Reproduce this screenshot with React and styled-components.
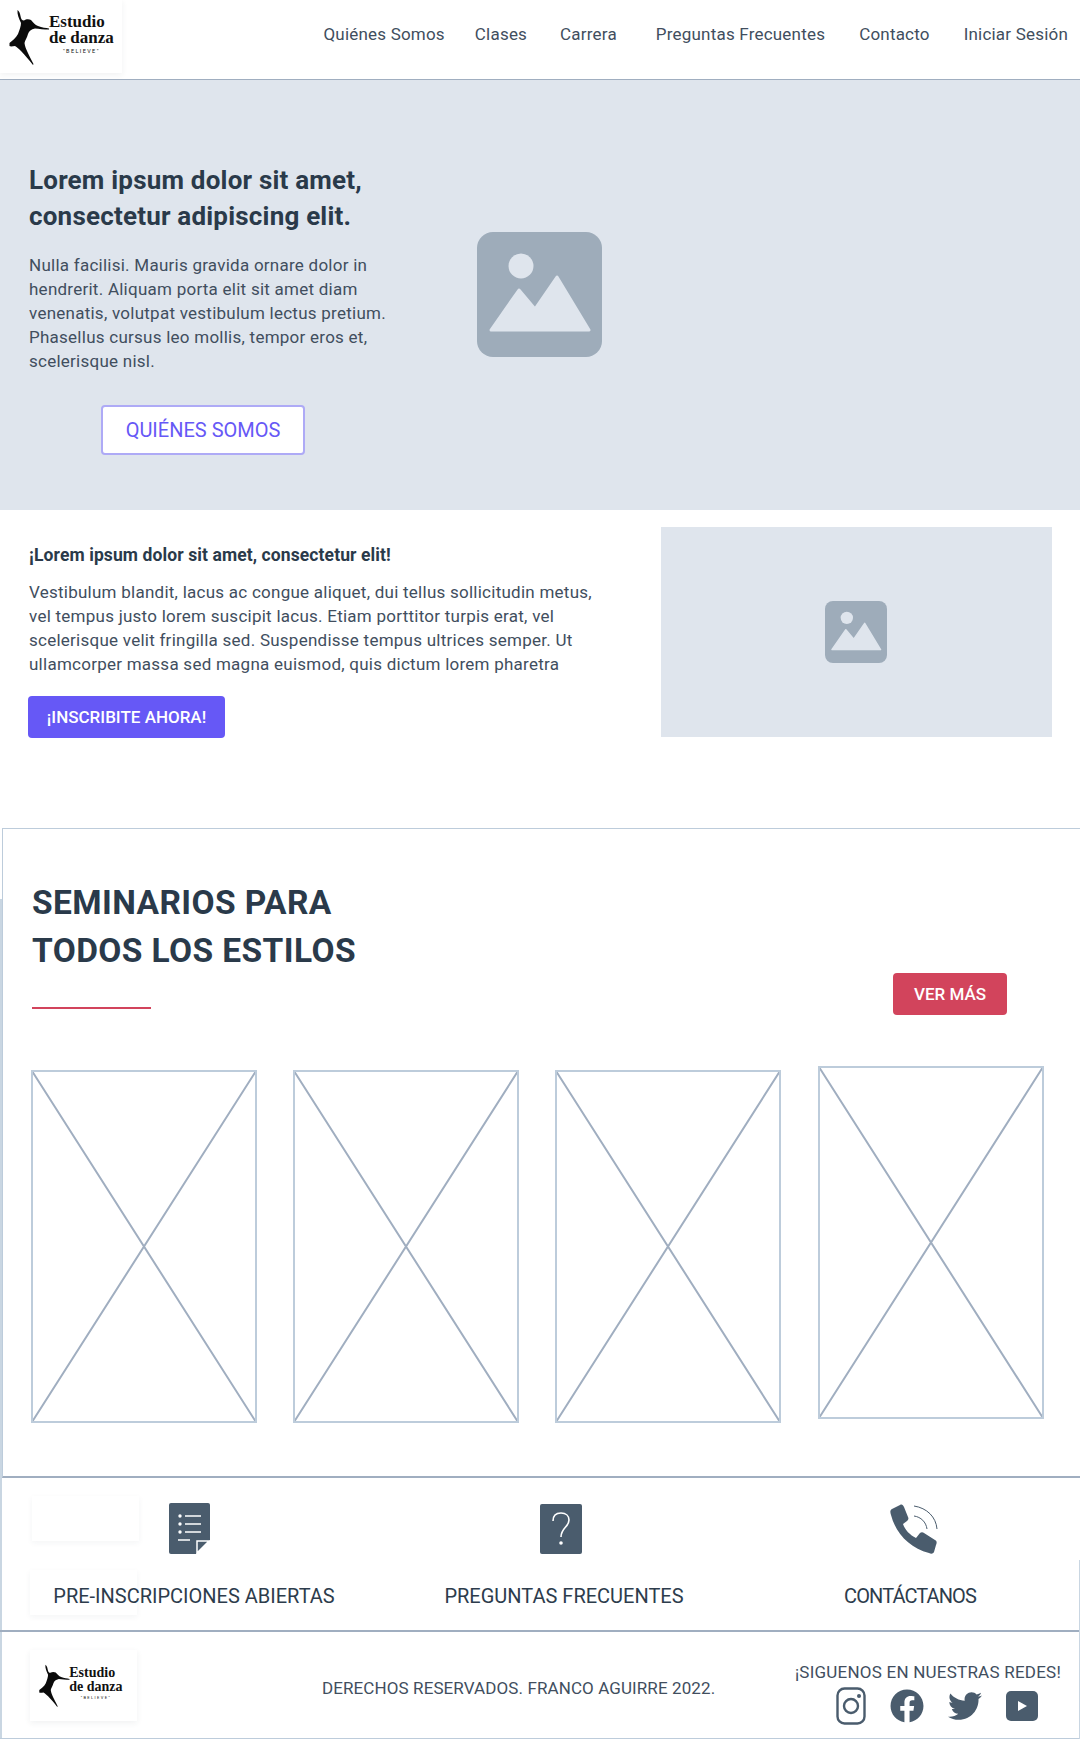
import React from "react";
import styled, { createGlobalStyle } from "styled-components";
import { FaFacebook, FaTwitter } from "react-icons/fa";

const Global = createGlobalStyle`
  html, body { margin: 0; padding: 0; background: #fff; }
  body { font-family: Roboto, "Liberation Sans", sans-serif; color: #2d3c4c; }
  * { box-sizing: border-box; }
`;

const Page = styled.div`
  position: relative;
  width: 1080px;
  height: 1739px;
  overflow: hidden;
  &::before {
    content: "";
    position: absolute;
    left: 0;
    top: 899px;
    bottom: 0;
    width: 2px;
    background: #c9d6e2;
  }
  &::after {
    content: "";
    position: absolute;
    right: 0;
    top: 1560px;
    bottom: 0;
    width: 1px;
    background: #c9d6e2;
  }
`;

const Header = styled.header`
  height: 80px;
  border-bottom: 1px solid #a0aec0;
  display: flex;
  justify-content: space-between;
`;

const LogoCard = styled.div`
  width: ${(p) => p.$w}px;
  height: ${(p) => p.$h}px;
  padding-left: ${(p) => p.$pad}px;
  background: #fff;
  box-shadow: 0 2px 6px rgba(45, 55, 72, 0.07);
  display: flex;
  align-items: center;
  flex: none;
`;

const LogoText = styled.div`
  font-family: "Liberation Serif", serif;
  font-weight: 700;
  color: #111;
  text-align: left;
  font-size: ${(p) => p.$size}px;
  line-height: 0.93;
  margin-left: -1px;
  margin-top: -5px;
  white-space: nowrap;
`;

const Believe = styled.div`
  font-family: Roboto, sans-serif;
  font-weight: 400;
  font-size: ${(p) => p.$size}px;
  letter-spacing: 1.4px;
  line-height: 1;
  margin-top: 3px;
  text-align: center;
`;

const Nav = styled.nav`
  display: flex;
  align-items: center;
  height: 68px;
  padding-right: 12px;
`;

const NavLink = styled.a`
  font-size: 17px;
  color: #414e5e;
  letter-spacing: 0.2px;
  margin-left: ${(p) => p.$gap}px;
  white-space: nowrap;
`;

const Hero = styled.section`
  height: 430px;
  background: #dfe5ed;
  display: flex;
  padding: 82px 0 0 29px;
`;

const HeroCopy = styled.div`
  width: 448px;
  flex: none;
`;

const HeroTitle = styled.h1`
  margin: 0 0 19px;
  font-size: 26px;
  line-height: 36px;
  font-weight: 700;
  letter-spacing: 0.2px;
  color: #2a3a4a;
`;

const BodyText = styled.p`
  margin: 0;
  font-size: 17px;
  line-height: 24px;
  letter-spacing: 0.25px;
  color: #414e5e;
  white-space: nowrap;
`;

const OutlineButton = styled.a`
  display: flex;
  align-items: center;
  justify-content: center;
  width: 204px;
  height: 50px;
  margin: 32px 0 0 72px;
  background: #fff;
  border: 2px solid #aeaaf6;
  border-radius: 4px;
  font-size: 20px;
  color: #6658f6;
`;

const HeroImage = styled.div`
  width: 125px;
  height: 125px;
  margin-top: 70px;
  flex: none;
`;

const Intro = styled.section`
  height: 318px;
  display: flex;
  justify-content: space-between;
  padding: 17px 28px 0 29px;
`;

const IntroCopy = styled.div`
  width: 570px;
  padding-top: 16px;
`;

const IntroTitle = styled.h2`
  margin: 0 0 13px;
  font-size: 17.5px;
  line-height: 24px;
  font-weight: 700;
  letter-spacing: 0.1px;
  color: #2a3a4a;
`;

const SolidButton = styled.a`
  display: flex;
  align-items: center;
  justify-content: center;
  height: 42px;
  width: ${(p) => p.$w}px;
  background: ${(p) => p.$bg};
  border-radius: 4px;
  color: #fff;
  font-weight: 500;
  font-size: 17px;
`;

const IntroAction = styled.div`
  margin: 20px 0 0 -1px;
`;

const IntroImage = styled.div`
  width: 391px;
  height: 210px;
  padding-right: 2px;
  background: #dfe5ed;
  display: flex;
  align-items: center;
  justify-content: center;
`;

const Seminars = styled.section`
  height: 650px;
  margin-left: 2px;
  border-top: 1px solid #bdccdb;
  border-left: 1px solid #bdccdb;
  border-bottom: 2px solid #a0aec0;
  padding: 50px 0 0 29px;
  display: flex;
  flex-direction: column;
`;

const SeminarHead = styled.div`
  display: flex;
  justify-content: space-between;
  height: 191px;
`;

const SeminarTitle = styled.h2`
  margin: 0;
  font-size: 33.5px;
  line-height: 48px;
  font-weight: 700;
  letter-spacing: 0.4px;
  color: #2a3a4a;
`;

const RedRule = styled.div`
  width: 119px;
  height: 2px;
  background: #d2445c;
  margin-top: 32px;
`;

const VerMasSlot = styled.div`
  margin: 94px 73px 0 0;
`;

const Cards = styled.div`
  display: flex;
  gap: 36px;
  margin-left: -1px;
`;

const Card = styled.div`
  width: 226px;
  height: 353px;
  flex: none;
  margin-top: ${(p) => p.$lift || 0}px;
  margin-left: ${(p) => p.$nudge || 0}px;
`;

const Features = styled.section`
  height: 154px;
  border-bottom: 2px solid #a0aec0;
  display: grid;
  grid-template-columns: 388px 352px 340px;
  position: relative;
`;

const Ghost = styled.div`
  position: absolute;
  left: ${(p) => p.$x}px;
  top: ${(p) => p.$y}px;
  width: 107px;
  height: 45px;
  background: #fff;
  box-shadow: 0 2px 6px rgba(45, 55, 72, 0.05);
`;

const Feature = styled.div`
  position: relative;
  display: flex;
  flex-direction: column;
  align-items: center;
  padding-top: 24px;
`;

const IconSlot = styled.div`
  height: 54px;
  margin-left: ${(p) => p.$shift}px;
  display: flex;
  align-items: center;
  justify-content: center;
`;

const FeatureLabel = styled.div`
  margin-top: 27px;
  font-size: 20px;
  line-height: 26px;
  letter-spacing: ${(p) => p.$track || 0}px;
  color: #2d3c4c;
  white-space: nowrap;
`;

const Footer = styled.footer`
  height: 107px;
  border-bottom: 1px solid #bdccdb;
  display: flex;
  padding: 18px 19px 0 30px;
  position: relative;
`;

const Copyright = styled.div`
  margin: 26px 0 0 185px;
  width: 470px;
  font-size: 17px;
  line-height: 24px;
  letter-spacing: 0.1px;
  color: #414e5e;
  white-space: nowrap;
`;

const Social = styled.div`
  margin: 10px 0 0 auto;
  display: flex;
  flex-direction: column;
  align-items: flex-end;
`;

const SocialTitle = styled.div`
  font-size: 17px;
  line-height: 24px;
  letter-spacing: 0.23px;
  color: #414e5e;
  white-space: nowrap;
`;

const SocialIcons = styled.div`
  display: flex;
  align-items: center;
  gap: 24px;
  margin: 3px 23px 0 0;
  color: #4a5c6d;
`;

const Dancer = ({ h }) => (
  <svg width={(h * 50) / 64} height={h} viewBox="0 0 50 64" style={{ flex: "none" }}>
    <path
      fill="#0b0b0b"
      d="M17.5 5 C19 6 20 8 20.5 11 C21 14 22 15.5 24 15.5 C26 14 29 14 31 15 C33 17 35 20 38 21 C42 22.5 46 23 49 23.5 L49 24.5 C44 24.5 39 24 35 23.5 C31 24.5 29 26 28 29 C27 33 25 35 24.5 38 C25 43 29 50 33.5 59 L33 60 C29 55 25 50 21 46 C19 44 17 42 15 41 C13 41 11 42 9.5 41 L9.5 38 C12 36 16 33 18 29 C19.5 25 21 21 21 18 C19 14 17 9 17.5 5Z"
    />
  </svg>
);

const Logo = ({ w, h, pad, dancer, size, tiny }) => (
  <LogoCard $w={w} $h={h} $pad={pad}>
    <Dancer h={dancer} />
    <LogoText $size={size}>
      Estudio
      <br />
      de danza
      <Believe $size={tiny}>"BELIEVE"</Believe>
    </LogoText>
  </LogoCard>
);

const PictureIcon = ({ size }) => (
  <svg width={size} height={size} viewBox="0 0 125 125">
    <rect width="125" height="125" rx="16" fill="#9eacba" />
    <circle cx="44" cy="34" r="12.5" fill="#dfe5ed" />
    <path
      d="M14 98 L42 58 L58 77 L80 45 L112 98 Z"
      fill="#dfe5ed"
      stroke="#dfe5ed"
      strokeWidth="3"
      strokeLinejoin="round"
    />
  </svg>
);

const CrossBox = () => (
  <svg width="226" height="353" viewBox="0 0 226 353">
    <path d="M1 1 L225 352 M225 1 L1 352" stroke="#a0aec0" strokeWidth="2" fill="none" />
    <rect x="1" y="1" width="224" height="351" fill="none" stroke="#bdccdb" strokeWidth="2" />
  </svg>
);

const DocIcon = () => (
  <svg width="41" height="52" viewBox="0 0 41 52">
    <path d="M2 0 H39 a2 2 0 0 1 2 2 V37 L27 51 H2 a2 2 0 0 1 -2 -2 V2 a2 2 0 0 1 2 -2Z" fill="#4a5c6d" />
    <path d="M28 50 V38 H40 Z" fill="#4a5c6d" stroke="#fff" strokeWidth="1.5" />
    <g stroke="#fff" strokeWidth="1.4">
      <path d="M16 13 H32 M16 21 H32 M16 29 H32 M9 37 H21" />
    </g>
    <g fill="#fff">
      <circle cx="11" cy="13" r="1.7" />
      <circle cx="11" cy="21" r="1.7" />
      <circle cx="11" cy="29" r="1.7" />
    </g>
  </svg>
);

const QuestionIcon = () => (
  <svg width="42" height="50" viewBox="0 0 42 50">
    <rect width="42" height="50" rx="2" fill="#4a5c6d" />
    <path
      d="M13 17 C13 11 17 9 21 9 C26 9 29 12 29 16 C29 23 21 24 21 33"
      fill="none"
      stroke="#fff"
      strokeWidth="1.6"
    />
    <circle cx="21" cy="39" r="1.8" fill="#fff" />
  </svg>
);

const PhoneIcon = () => (
  <svg width="48" height="50" viewBox="0 0 48 50">
    <path
      d="M2 5 L10 1 C12 0 13 1 14 3 L18 13 C19 15 18 16 17 17 L13 20 C15 26 20 31 26 34 L30 29 C31 28 33 28 34 29 L45 36 C47 37 47 39 46 41 L44 48 C43 50 41 50 39 49 C20 44 6 30 1 11 C0 8 0 6 2 5Z"
      fill="#4a5c6d"
    />
    <path d="M24 2 C37 4 46 13 47 25 M24 12 C31 13 36 18 37 25" fill="none" stroke="#4a5c6d" strokeWidth="1" />
  </svg>
);

const InstagramIcon = () => (
  <svg width="30" height="38" viewBox="0 0 30 38">
    <rect x="1.5" y="1.5" width="27" height="35" rx="7" fill="none" stroke="#4a5c6d" strokeWidth="2.4" />
    <circle cx="15" cy="19" r="7" fill="none" stroke="#4a5c6d" strokeWidth="2.4" />
    <circle cx="23" cy="9" r="2" fill="#4a5c6d" />
  </svg>
);

const YoutubeIcon = () => (
  <svg width="32" height="30" viewBox="0 0 32 30">
    <rect width="32" height="30" rx="5" fill="#4a5c6d" />
    <path d="M12 10 L21 15 L12 20Z" fill="#fff" />
  </svg>
);

export default function App() {
  return (
    <Page>
      <Global />
      <Header>
        <Logo w={122} h={73} pad={0} dancer={64} size={17} tiny={5.5} />
        <Nav>
          <NavLink $gap={0}>Quiénes Somos</NavLink>
          <NavLink $gap={30}>Clases</NavLink>
          <NavLink $gap={33}>Carrera</NavLink>
          <NavLink $gap={39}>Preguntas Frecuentes</NavLink>
          <NavLink $gap={34}>Contacto</NavLink>
          <NavLink $gap={34}>Iniciar Sesión</NavLink>
        </Nav>
      </Header>

      <Hero>
        <HeroCopy>
          <HeroTitle>
            Lorem ipsum dolor sit amet,
            <br />
            consectetur adipiscing elit.
          </HeroTitle>
          <BodyText>
            Nulla facilisi. Mauris gravida ornare dolor in
            <br />
            hendrerit. Aliquam porta elit sit amet diam
            <br />
            venenatis, volutpat vestibulum lectus pretium.
            <br />
            Phasellus cursus leo mollis, tempor eros et,
            <br />
            scelerisque nisl.
          </BodyText>
          <OutlineButton>QUIÉNES SOMOS</OutlineButton>
        </HeroCopy>
        <HeroImage>
          <PictureIcon size={125} />
        </HeroImage>
      </Hero>

      <Intro>
        <IntroCopy>
          <IntroTitle>¡Lorem ipsum dolor sit amet, consectetur elit!</IntroTitle>
          <BodyText>
            Vestibulum blandit, lacus ac congue aliquet, dui tellus sollicitudin metus,
            <br />
            vel tempus justo lorem suscipit lacus. Etiam porttitor turpis erat, vel
            <br />
            scelerisque velit fringilla sed. Suspendisse tempus ultrices semper. Ut
            <br />
            ullamcorper massa sed magna euismod, quis dictum lorem pharetra
          </BodyText>
          <IntroAction>
            <SolidButton $w={197} $bg="#6658f6">¡INSCRIBITE AHORA!</SolidButton>
          </IntroAction>
        </IntroCopy>
        <IntroImage>
          <PictureIcon size={62} />
        </IntroImage>
      </Intro>

      <Seminars>
        <SeminarHead>
          <div>
            <SeminarTitle>
              SEMINARIOS PARA
              <br />
              TODOS LOS ESTILOS
            </SeminarTitle>
            <RedRule />
          </div>
          <VerMasSlot>
            <SolidButton $w={114} $bg="#d2445c">VER MÁS</SolidButton>
          </VerMasSlot>
        </SeminarHead>
        <Cards>
          <Card><CrossBox /></Card>
          <Card><CrossBox /></Card>
          <Card><CrossBox /></Card>
          <Card $lift={-4} $nudge={1}><CrossBox /></Card>
        </Cards>
      </Seminars>

      <Features>
        <Ghost $x={32} $y={18} />
        <Ghost $x={30} $y={92} />
        <Feature>
          <IconSlot $shift={-9}><DocIcon /></IconSlot>
          <FeatureLabel>PRE-INSCRIPCIONES ABIERTAS</FeatureLabel>
        </Feature>
        <Feature>
          <IconSlot $shift={-7}><QuestionIcon /></IconSlot>
          <FeatureLabel>PREGUNTAS FRECUENTES</FeatureLabel>
        </Feature>
        <Feature>
          <IconSlot $shift={7}><PhoneIcon /></IconSlot>
          <FeatureLabel $track={-0.9}>CONTÁCTANOS</FeatureLabel>
        </Feature>
      </Features>

      <Footer>
        <Logo w={107} h={71} pad={2} dancer={49} size={14} tiny={4} />
        <Copyright>DERECHOS RESERVADOS. FRANCO AGUIRRE 2022.</Copyright>
        <Social>
          <SocialTitle>¡SIGUENOS EN NUESTRAS REDES!</SocialTitle>
          <SocialIcons>
            <InstagramIcon />
            <FaFacebook size={34} />
            <FaTwitter size={34} />
            <YoutubeIcon />
          </SocialIcons>
        </Social>
      </Footer>
    </Page>
  );
}
